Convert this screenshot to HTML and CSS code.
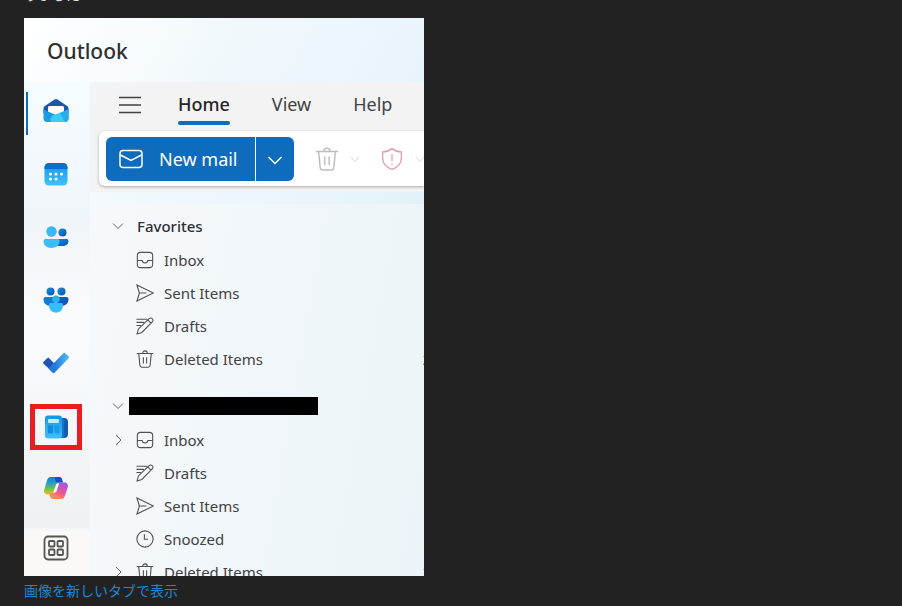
FILE: index.html
```
<!DOCTYPE html>
<html lang="ja">
<head>
    <meta charset="UTF-8">
    <meta name="viewport" content="width=device-width, initial-scale=1.0">
    <title>Outlook</title>
    <link rel="stylesheet" href="styles.css">
</head>
<body>
    <svg class="defs" aria-hidden="true">
        <defs>
            <linearGradient id="blueV" x1="0" y1="0" x2="0" y2="1">
                <stop offset="0" stop-color="#1296e8"/><stop offset="1" stop-color="#3fc2fb"/>
            </linearGradient>
            <linearGradient id="darkH" x1="0" y1="0" x2="1" y2="1">
                <stop offset="0" stop-color="#168fe0"/><stop offset="1" stop-color="#0a52b0"/>
            </linearGradient>
            <linearGradient id="check" x1="0" y1="0" x2="1" y2="0">
                <stop offset="0.3" stop-color="#2277d8"/><stop offset="1" stop-color="#55bdf5"/>
            </linearGradient>
            <linearGradient id="copA" x1="0" y1="0" x2="0" y2="1">
                <stop offset="0" stop-color="#1579dc"/><stop offset="0.35" stop-color="#22a3c4"/><stop offset="0.7" stop-color="#7cc043"/><stop offset="1" stop-color="#f0c21c"/>
            </linearGradient>
            <linearGradient id="copB" x1="0.7" y1="0" x2="0.2" y2="1">
                <stop offset="0" stop-color="#9c55e8"/><stop offset="0.5" stop-color="#ee5595"/><stop offset="1" stop-color="#ff9b4a"/>
            </linearGradient>
        </defs>
        <symbol id="inbox" viewBox="0 0 20 20">
            <rect x="1.5" y="1.5" width="17" height="17" rx="3.5"/>
            <path d="M1.5 10.5h5.2c.3 1.900 1.500 2.900 3.300 2.900s3-1 3.300-2.900h5.200"/>
        </symbol>
        <symbol id="sent" viewBox="0 0 20 20">
            <path d="M1 1 19.300 10 1 19 3.800 10zM3.800 10H11.500"/>
        </symbol>
        <symbol id="drafts" viewBox="0 0 20 20">
            <path d="M.5 2.500h12M.5 6h8.500M.5 9.500h5M1.200 18.800l1.500-5.500L14.500 1.800a2.500 2.500 0 0 1 3.600 0 2.500 2.500 0 0 1 0 3.600L6.500 17.200zM13 3.300l3.600 3.600"/>
        </symbol>
        <symbol id="trash" viewBox="0 0 20 20">
            <path d="M.8 3.800h18.400M7.400 3.800c0-1.800 1-2.800 2.600-2.800s2.600 1 2.600 2.800M3 3.800l1.300 13.200c.1 1.400.9 2.200 2.100 2.200h7.200c1.200 0 2-.8 2.100-2.200L17 3.800M8.200 8v7M11.800 8v7"/>
        </symbol>
        <symbol id="clock" viewBox="0 0 20 20">
            <circle cx="10" cy="10" r="9"/><path d="M9.300 4.800v5.500h4"/>
        </symbol>
        <symbol id="down" viewBox="0 0 12 12"><path d="M1 3.500 6 8.500l5-5"/></symbol>
        <symbol id="right" viewBox="0 0 12 12"><path d="M4 1 9 6l-5 5"/></symbol>
    </svg>

    <main class="post">
        <p class="post-text">りました</p>

        <section class="shot">
            <header class="title">Outlook</header>
            <div class="app">
                <nav class="rail">
                    <button class="rail-item active" aria-label="Mail">
                        <svg viewBox="0 0 26 26">
                            <path d="M.5 10.500a3 3 0 0 1 1.400-2.500L11.500 1.500a3 3 0 0 1 3 0L24.100 8a3 3 0 0 1 1.400 2.500v5H.5z" fill="#1558ad"/>
                            <path d="M5 9.500a1.500 1.500 0 0 1 1.500-1.500h13A1.500 1.500 0 0 1 21 9.500V16l-8 4-8-4z" fill="#fff"/>
                            <path d="M.5 11.500 13 17l12.500-5.500v8.500a4 4 0 0 1-4 4h-17a4 4 0 0 1-4-4z" fill="#1a9be6"/>
                            <path d="M25.500 11.500v8.500a4 4 0 0 1-4 4H8c-1.500-4 .5-6.500 4.500-7.500z" fill="#38cdf8"/>
                            <path d="M25.500 11.500v8.500a4 4 0 0 1-3.500 4L17 15z" fill="#2aa9ec"/>
                        </svg>
                    </button>
                    <button class="rail-item" aria-label="Calendar">
                        <svg viewBox="0 0 26 26">
                            <rect x="1.500" y="2" width="23" height="22.500" rx="4.500" fill="url(#blueV)"/>
                            <path d="M1.500 8V6.500A4.500 4.500 0 0 1 6 2h14a4.500 4.500 0 0 1 4.500 4.500V8z" fill="#0c6dc6"/>
                            <g fill="#fff"><circle cx="7.500" cy="13" r="1.500"/><circle cx="13" cy="13" r="1.500"/><circle cx="18.500" cy="13" r="1.500"/><circle cx="7.500" cy="18" r="1.500"/><circle cx="13" cy="18" r="1.500"/></g>
                        </svg>
                    </button>
                    <button class="rail-item" aria-label="People">
                        <svg viewBox="0 0 26 26">
                            <circle cx="19.500" cy="8.500" r="4" fill="url(#darkH)"/>
                            <path d="M11 15h12.500a2 2 0 0 1 2 2c0 3-2.500 5-6.500 5h-8z" fill="url(#darkH)"/>
                            <circle cx="8.500" cy="7.500" r="5.200" fill="#38b8f6"/>
                            <path d="M2.500 15h12a2 2 0 0 1 2 2c0 4-3 7-8 7s-8-3-8-7a2 2 0 0 1 2-2z" fill="#3bbdf8"/>
                        </svg>
                    </button>
                    <button class="rail-item" aria-label="Groups">
                        <svg viewBox="0 0 26 26">
                            <circle cx="7.500" cy="4.500" r="4" fill="url(#darkH)"/><circle cx="18.500" cy="4.500" r="4" fill="url(#darkH)"/>
                            <path d="M2.500 10H12v9H8c-5 0-7.500-3-7.500-7a2 2 0 0 1 2-2z" fill="#127bd0"/>
                            <path d="M14 10h9.500a2 2 0 0 1 2 2c0 4-2.500 7-7.500 7h-4z" fill="#0d5bb4"/>
                            <path d="M8 16h10a1.800 1.800 0 0 1 2 2c0 5-3 7.500-7 7.500S6 23 6 18a1.800 1.800 0 0 1 2-2z" fill="#35bdf8"/>
                            <circle cx="13" cy="12.300" r="3.700" fill="#2cb1f2"/>
                        </svg>
                    </button>
                    <button class="rail-item" aria-label="To Do">
                        <svg viewBox="0 0 26 26">
                            <path d="M.6 11.800 4.500 7.900a1 1 0 0 1 1.400 0l6 6-3.500 7L.6 13.700a1.300 1.300 0 0 1 0-1.900z" fill="#1f55b5"/>
                            <path d="M5.500 18.500 20.500 3.200a1.200 1.200 0 0 1 1.700 0l3.500 3.300a1.200 1.200 0 0 1 0 1.700L11.500 22.800a1.600 1.600 0 0 1-2 0z" fill="url(#check)"/>
                        </svg>
                    </button>
                    <button class="rail-item marked" aria-label="News">
                        <svg viewBox="0 0 26 26">
                            <path d="M16 4h5a4 4 0 0 1 4 4v12a4 4 0 0 1-4 4h-6z" fill="#0d5cae"/>
                            <path d="M20 5v19" stroke="#1c8fe0"/>
                            <rect x="2" y="1.500" width="17" height="23" rx="3" fill="url(#blueV)"/>
                            <rect x="5" y="5" width="11" height="4" rx="1" fill="#b9efff"/>
                            <rect x="5" y="11.500" width="5" height="8" rx="1" fill="#128adf"/><rect x="11.500" y="11.500" width="5" height="8" rx="1" fill="#1b9aea"/>
                        </svg>
                    </button>
                    <button class="rail-item low" aria-label="Copilot">
                        <svg viewBox="0 0 26 26">
                            <path d="M8 2h8c2 0 2.700 1 3.200 3l.6 2.500h-3c-2 0-2.800 1-3.300 3l-1.700 6c-.6 2-1.600 3-3.600 3H5c-3 0-4.500-2-3.700-5L4 5.500C4.700 3 6 2 8 2z" fill="url(#copA)"/>
                            <path d="M12 2h4c2 0 2.700 1 3.200 3l.6 2.500h-5c-2.500 0-3-4-2.800-5.500z" fill="#1551bb"/>
                            <path d="M18 24h-8c-2 0-2.700-1-3.200-3l-.5-2.500h3c2 0 2.800-1 3.300-3l1.700-5c.6-2 1.600-3 3.600-3H21c3 0 4.500 2 3.700 5L22 20.500c-.7 2.500-2 3.500-4 3.500z" fill="url(#copB)"/>
                            <path d="m13.200 9 3-.8-3 8.800-3 .8z" fill="#fff"/>
                        </svg>
                    </button>
                    <button class="rail-item low" aria-label="More apps">
                        <svg viewBox="0 0 26 26" fill="none" stroke="#555" stroke-width="1.800">
                            <rect x="1.500" y="1.500" width="23" height="23" rx="3.500"/>
                            <rect x="6" y="6" width="5.500" height="5.500" rx="1"/><rect x="14.500" y="6" width="5.500" height="5.500" rx="1"/>
                            <rect x="6" y="14.500" width="5.500" height="5.500" rx="1"/><rect x="14.500" y="14.500" width="5.500" height="5.500" rx="1"/>
                        </svg>
                    </button>
                </nav>

                <div class="content">
                    <div class="ribbon">
                        <div class="tabs">
                            <button class="menu" aria-label="Menu">
                                <svg viewBox="0 0 24 18"><path d="M1 1.500h22M1 9h22M1 16.500h22"/></svg>
                            </button>
                            <button class="tab selected">Home</button>
                            <button class="tab">View</button>
                            <button class="tab">Help</button>
                        </div>
                        <div class="toolbar">
                            <button class="new-mail">
                                <svg viewBox="0 0 24 20"><rect x="1" y="1.500" width="22" height="17" rx="3"/><path d="m1.500 6 10.500 5.500L22.500 6"/></svg>
                                New mail
                            </button>
                            <button class="new-more" aria-label="New mail options"><svg viewBox="0 0 16 16"><path d="m1.500 5 6.500 6.500L14.500 5"/></svg></button>
                            <button class="tool" aria-label="Delete" disabled>
                                <svg class="big"><use href="#trash"/></svg>
                                <svg class="small"><use href="#down"/></svg>
                            </button>
                            <button class="tool report" aria-label="Report" disabled>
                                <svg class="big" viewBox="0 0 22 22"><path d="M11 1.500c2.400 1.900 5 2.900 8.500 3v6c0 4.600-3 8-8.500 10-5.500-2-8.500-5.400-8.500-10v-6c3.500-.1 6.100-1.100 8.500-3zM11 6.500v6.500M11 14.800v1.500"/></svg>
                                <svg class="small"><use href="#down"/></svg>
                            </button>
                        </div>
                    </div>

                    <div class="folders">
                        <div class="group">
                            <button class="group-name"><svg class="chevron"><use href="#down"/></svg>Favorites</button>
                            <a class="folder" href="#"><span class="chevron"></span><svg class="icon"><use href="#inbox"/></svg>Inbox</a>
                            <a class="folder" href="#"><span class="chevron"></span><svg class="icon"><use href="#sent"/></svg>Sent Items</a>
                            <a class="folder" href="#"><span class="chevron"></span><svg class="icon"><use href="#drafts"/></svg>Drafts</a>
                            <a class="folder" href="#"><span class="chevron"></span><svg class="icon"><use href="#trash"/></svg>Deleted Items<span class="count">2</span></a>
                        </div>
                        <div class="group">
                            <button class="group-name" aria-label="Account"><svg class="chevron"><use href="#down"/></svg><span class="redacted"></span></button>
                            <a class="folder" href="#"><svg class="chevron"><use href="#right"/></svg><svg class="icon"><use href="#inbox"/></svg>Inbox</a>
                            <a class="folder" href="#"><span class="chevron"></span><svg class="icon"><use href="#drafts"/></svg>Drafts</a>
                            <a class="folder" href="#"><span class="chevron"></span><svg class="icon"><use href="#sent"/></svg>Sent Items</a>
                            <a class="folder" href="#"><span class="chevron"></span><svg class="icon"><use href="#clock"/></svg>Snoozed</a>
                            <a class="folder" href="#"><svg class="chevron"><use href="#right"/></svg><svg class="icon"><use href="#trash"/></svg>Deleted Items<span class="count">2</span></a>
                        </div>
                    </div>
                </div>
            </div>
        </section>

        <a class="open-link" href="#">画像を新しいタブで表示</a>
    </main>
</body>
</html>
```
FILE: styles.css
```
* {
    box-sizing: border-box;
}

body {
    margin: 0;
    background: #222;
    color: #ddd;
    font-family: "Noto Sans CJK JP", sans-serif;
    font-size: 14px;
    overflow: hidden;
}

button {
    border: none;
    padding: 0;
    background: none;
    color: inherit;
    font: inherit;
    cursor: pointer;
}

/* shared gradients and symbols */
.defs {
    display: block;
    width: 0;
    height: 0;
}

.post {
    padding: 0 24px;
}

.post-text {
    margin: -16px 0 14px;
    line-height: 20px;
}

/* mail window */
.shot {
    display: flex;
    flex-direction: column;
    width: 100%;
    max-width: 400px;
    aspect-ratio: 400 / 558;
    overflow: hidden;
    color: #424242;
    background: linear-gradient(120deg, #fff 0%, #f1f8fc 30%, #e8f4fb 60%, #cfe5f2 100%);
    font-family: "Noto Sans", sans-serif;
    font-size: 15px;
}

.title {
    flex: none;
    height: 64px;
    padding: 2px 0 0 23px;
    font-size: 21px;
    font-weight: 500;
    line-height: 62px;
    color: #303030;
}

.app {
    display: flex;
    flex: 1;
    min-height: 0;
}

.rail {
    display: flex;
    flex-direction: column;
    flex: none;
    width: 66px;
    background: linear-gradient(#f5fcff, #f0f5f9 28%, #fafbfd 48%, #eef2f5 90%, #faf9f8 91%);
}

.rail-item {
    display: flex;
    flex: none;
    align-items: center;
    justify-content: center;
    height: 63px;
    padding: 3px 2px 8px 0;
}

.rail-item svg {
    width: 26px;
    height: 26px;
}

.rail-item.low {
    height: 60px;
}

.rail-item.active {
    background: linear-gradient(#0f6cbd, #0f6cbd) 2px 10px / 2px 43px no-repeat;
}

.rail-item.marked {
    align-self: flex-start;
    width: 52px;
    height: 46px;
    margin: 7px 6px 10px;
    padding: 0;
    border: 5px solid #ec1c24;
}

.content {
    display: flex;
    flex-direction: column;
    flex: 1;
    min-width: 0;
}

.ribbon {
    flex: none;
    margin-bottom: 12px;
    padding: 0 0 6px 9px;
    background: #f3f3f3;
}

.tabs {
    display: flex;
    align-items: flex-start;
    gap: 42px;
    height: 49px;
    padding-left: 19px;
    font-size: 18px;
}

.menu {
    width: 24px;
    height: 46px;
    margin-right: -6px;
}

.menu svg {
    display: block;
    width: 24px;
    height: 18px;
    fill: none;
    stroke: #424242;
    stroke-width: 1.5;
}

.tab {
    height: 43px;
    padding-top: 5px;
    border-bottom: 4px solid transparent;
}

.tab.selected {
    position: relative;
    font-weight: 500;
    color: #242424;
}

.tab.selected::after {
    content: "";
    position: absolute;
    left: 0;
    right: 0;
    bottom: -4px;
    height: 4px;
    border-radius: 2px;
    background: #0f6cbd;
}

.toolbar {
    display: flex;
    align-items: center;
    height: 55px;
    padding-left: 7px;
    overflow: hidden;
    background: #fff;
    border-radius: 6px 0 0 6px;
    box-shadow: 0 1px 3px rgba(0, 0, 0, 0.3);
}

.toolbar svg {
    flex: none;
    fill: none;
    stroke: currentColor;
    stroke-width: 1.5;
}

.new-mail {
    display: flex;
    align-items: center;
    gap: 16px;
    flex: none;
    height: 44px;
    padding: 0 17px 0 13px;
    background: #0f6cbd;
    border-radius: 6px 0 0 6px;
    color: #fff;
    font-size: 18px;
    white-space: nowrap;
}

.new-mail svg {
    width: 24px;
    height: 20px;
}

.new-more {
    flex: none;
    width: 38px;
    height: 44px;
    margin-left: 1px;
    background: #0f6cbd;
    border-radius: 0 6px 6px 0;
    color: #fff;
}

.new-more svg {
    width: 16px;
    height: 16px;
    vertical-align: middle;
}

.tool {
    display: flex;
    align-items: center;
    flex: none;
    gap: 11px;
    margin-left: 21px;
    color: #bdbdbd;
}

.tool .big {
    width: 24px;
    height: 24px;
    stroke-width: 1.2;
}

.tool .small {
    width: 10px;
    height: 10px;
    color: #e4e4e4;
}

.tool.report {
    margin-left: 20px;
    color: #dfa0a7;
}

.folders {
    flex: 1;
    padding: 5px 0 0 22px;
    background: linear-gradient(100deg, #f6f9fc 0%, #f0f6fa 55%, #ebf4f8 100%);
}

.group {
    margin-bottom: 13px;
}

.group-name,
.folder {
    display: flex;
    align-items: center;
    width: 100%;
    color: #424242;
    text-decoration: none;
    white-space: nowrap;
}

.group-name {
    height: 35px;
    padding-bottom: 1px;
    font-weight: 500;
    color: #303030;
}

.folder {
    height: 33px;
    padding-bottom: 1px;
}

.chevron {
    flex: none;
    width: 12px;
    height: 12px;
    margin-right: 12px;
    fill: none;
    stroke: #616161;
}

.group-name .chevron {
    margin-right: 13px;
}

.icon {
    flex: none;
    width: 18px;
    height: 18px;
    margin-right: 10px;
    fill: none;
    stroke: #505050;
    stroke-width: 1.2;
}

.count {
    margin: 0 -7px 0 auto;
    color: #0f6cbd;
}

.redacted {
    width: 189px;
    height: 18px;
    margin-left: -8px;
    background: #000;
}

.open-link {
    display: inline-block;
    padding-top: 4px;
    color: #1c87d9;
    line-height: 20px;
    text-decoration: none;
}
```
